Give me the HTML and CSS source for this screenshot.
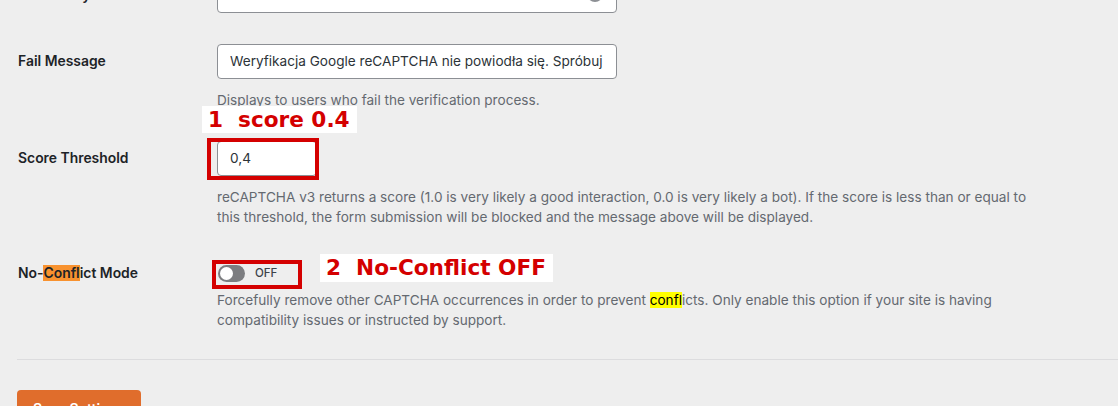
FILE: index.html
```html
<!DOCTYPE html>
<html lang="en">
<head>
<meta charset="utf-8">
<title>reCAPTCHA Settings</title>
<link rel="stylesheet" href="styles.css">
</head>
<body>
<div class="page">
  <div class="settings">
    <div class="row">
      <div class="label">Secret Key</div>
      <div class="field">
        <div class="input input-wide input-secret"><span class="input-text"><span class="secret-text">selm</span></span><span class="toggle-eye"></span></div>
      </div>
    </div>

    <div class="row">
      <div class="label">Fail Message</div>
      <div class="field">
        <div class="input input-wide"><span class="input-text">Weryfikacja Google reCAPTCHA nie powiodła się. Spróbuj ponownie.</span></div>
        <p class="desc">Displays to users who fail the verification process.</p>
      </div>
    </div>

    <div class="row">
      <div class="label">Score Threshold</div>
      <div class="field">
        <div class="input input-small"><span class="input-text">0,4</span></div>
        <p class="desc">reCAPTCHA v3 returns a score (1.0 is very likely a good interaction, 0.0 is very likely a bot). If the score is less than or equal to this threshold, the form submission will be blocked and the message above will be displayed.</p>
      </div>
    </div>

    <div class="row row-toggle">
      <div class="label label-toggle">No-<span class="hl-orange">Confl</span>ict Mode</div>
      <div class="field">
        <div class="switch-line">
          <span class="switch"><span class="knob"></span></span>
          <span class="switch-text">OFF</span>
        </div>
        <p class="desc desc-toggle">Forcefully remove other CAPTCHA occurrences in order to prevent <span class="hl-yellow">confl</span>icts. Only enable this option if your site is having compatibility issues or instructed by support.</p>
      </div>
    </div>
  </div>

  <hr class="divider">

  <button class="save-btn" type="button">Save Settings</button>

  <div class="note note-1">1  score 0.4</div>
  <div class="mark mark-1"></div>
  <div class="note note-2">2  No-Conflict OFF</div>
  <div class="mark mark-2"></div>
</div>
</body>
</html>
```

FILE: styles.css
```css
html, body {
  margin: 0;
  padding: 0;
}

body {
  background: #eeeeee;
  font-family: Inter, "Liberation Sans", Arial, sans-serif;
  color: #1d2327;
}

.page {
  position: relative;
  height: 406px;
  overflow: hidden;
  padding-left: 17px;
}

.settings {
  margin-top: -22px;
}

.row {
  display: grid;
  grid-template-columns: 200px 1fr;
  align-items: start;
}

.row + .row {
  margin-top: 31px;
}

.row.row-toggle {
  margin-top: 36px;
}

.label {
  font-size: 13.9px;
  font-weight: 600;
  line-height: 35px;
  padding-left: 1px;
  color: #1d2327;
}

.label-toggle {
  line-height: 20px;
}

.hl-orange {
  background: #f8922f;
}

.hl-yellow {
  background: #ffff00;
  color: #000;
}

.field {
  min-width: 0;
}

.input {
  box-sizing: border-box;
  height: 35px;
  border: 1px solid #8c8f94;
  border-radius: 4px;
  background: #fff;
  font-size: 13.6px;
  line-height: 33px;
  padding: 0 12px;
  color: #2c3338;
}

.input-text {
  display: block;
  white-space: nowrap;
  overflow: hidden;
}

.input-wide {
  width: 400px;
}

.input-small {
  width: 100px;
}

.input-secret {
  position: relative;
}

.secret-text {
  padding-left: 59px;
}

.toggle-eye {
  position: absolute;
  right: 13px;
  top: 7px;
  width: 16px;
  height: 16px;
  border-radius: 50%;
  background: #8c8f94;
}

.desc {
  margin: 11px 0 0;
  max-width: 828px;
  font-size: 13.6px;
  line-height: 20px;
  color: #646970;
}

.desc-toggle {
  margin-top: 7px;
}

.switch-line {
  display: flex;
  align-items: center;
  gap: 10px;
  height: 20px;
  padding-left: 1px;
}

.switch {
  box-sizing: border-box;
  width: 27px;
  height: 17px;
  border-radius: 9px;
  background: #7c7d80;
  display: flex;
  align-items: center;
  padding-left: 2px;
}

.knob {
  width: 13px;
  height: 13px;
  border-radius: 50%;
  background: #fff;
}

.switch-text {
  font-size: 11.5px;
  font-weight: 500;
  color: #3c434a;
}

.divider {
  margin: 29px 0 0;
  border: 0;
  border-top: 1px solid #dcdcde;
  height: 0;
}

.save-btn {
  margin-top: 30px;
  width: 124px;
  height: 36px;
  border: 0;
  border-radius: 4px;
  background: #e06d2c;
  color: #fff;
  font-family: inherit;
  font-size: 14px;
  font-weight: 600;
  padding: 0;
}

.note {
  position: absolute;
  background: #fff;
  color: #d40000;
  font-family: "DejaVu Sans", sans-serif;
  font-weight: bold;
  font-size: 21.6px;
  white-space: pre;
  padding: 0 7px 0 6px;
}

.note-1 {
  left: 202px;
  top: 106px;
  line-height: 27px;
}

.note-2 {
  left: 320px;
  top: 254px;
  line-height: 28px;
}

.mark {
  position: absolute;
  box-sizing: border-box;
  border: 4px solid #d40000;
}

.mark-1 {
  left: 207px;
  top: 138px;
  width: 112px;
  height: 42px;
}

.mark-2 {
  left: 212px;
  top: 260px;
  width: 90px;
  height: 29px;
}
```
